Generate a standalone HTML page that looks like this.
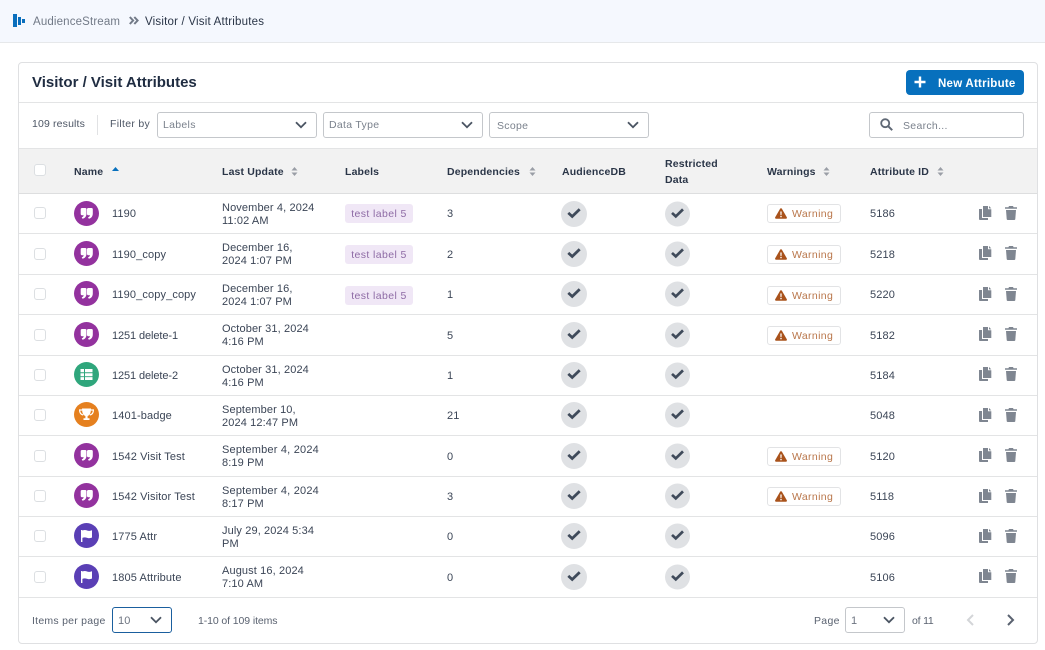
<!DOCTYPE html>
<html><head><meta charset="utf-8"><style>
html,body{margin:0;padding:0;width:1045px;height:650px;overflow:hidden;background:#fff;font-family:"Liberation Sans",sans-serif;color:#3b4556;font-size:11px}
div,span,svg{position:absolute;box-sizing:border-box}
.t{white-space:nowrap;line-height:14px;margin-top:1px;letter-spacing:.12px}
.h{font-weight:700;color:#2b3648;font-size:10.5px;letter-spacing:.15px}
.l{height:1px;background:#e3e4e5;left:19px;width:1018px}
.cb{left:34px;width:12px;height:12px;border:1px solid #dcdfe2;border-radius:3px;background:#fff}
.ic{left:74px;width:25px;height:25px}
.sel{height:26px;border:1px solid #c4c7cb;border-radius:3px;background:#fff}
.lab{left:345px;width:68px;height:19px;border-radius:3px;background:#f0e7f6;color:#8e6ba5;text-align:center;line-height:21px;font-size:10.5px;letter-spacing:.4px}
.w{left:767px;width:74px;height:19px;border:1px solid #e2e3e5;border-radius:3px;background:#fff}
.ws{left:24px;top:2px;color:#b9764a;font-size:10.5px;letter-spacing:.35px;line-height:14px}
</style></head><body>
<svg width="0" height="0" style="left:0;top:0">
<symbol id="q" viewBox="0 0 25 25"><circle cx="12.5" cy="12.5" r="12.5" fill="#93329e"/><path fill="#fff" d="M8 7h3.200c.9 0 1.300.5 1.300 1.300v4.200c0 2.800-1.500 4.700-4 5.300l-.8-1.500c1.200-.5 1.900-1.100 2-2.100H8c-.8 0-1.300-.5-1.300-1.300V8.300C6.700 7.500 7.200 7 8 7zM14.300 7h3.200c.9 0 1.300.5 1.300 1.300v4.200c0 2.800-1.500 4.700-4 5.300l-.8-1.500c1.200-.5 1.900-1.100 2-2.100h-1.700c-.8 0-1.300-.5-1.300-1.300V8.300c0-.8.5-1.300 1.300-1.300z"/></symbol>
<symbol id="g" viewBox="0 0 25 25"><circle cx="12.5" cy="12.5" r="12.5" fill="#2fa67c"/><path fill="#fff" d="M6.500 7h3.500v3.300H6.500zM11 7h7.500v3.300H11zM6.500 11.200h3.500v3H6.500zM11 11.200h7.500v3H11zM6.500 15.100h3.500V18H6.500zM11 15.100h7.500V18H11z"/></symbol>
<symbol id="tr" viewBox="0 0 25 25"><circle cx="12.5" cy="12.5" r="12.5" fill="#e5801f"/><path fill="none" stroke="#fff" stroke-width="1.2" d="M8 8H5.600c0 3 1.200 4.500 3.600 5M17 8h2.400c0 3-1.200 4.500-3.600 5"/><path fill="#fff" d="M8 6.500h9c0 4-1 6.700-3.400 7.500v2.300h1.900v1.700h-6v-1.700h1.900V14C9 13.200 8 10.500 8 6.500z"/></symbol>
<symbol id="f" viewBox="0 0 25 25"><circle cx="12.5" cy="12.5" r="12.5" fill="#5a3fb5"/><path fill="#fff" d="M7 7h1.400v.6c1.400-.8 3-.8 4.400-.2 1.400.6 3 .6 5.200-.2v7.300c-2.200.9-3.800.9-5.200.3-1.400-.6-3-.6-4.400.1V19H7z"/></symbol>
<symbol id="c" viewBox="0 0 26 26"><circle cx="13" cy="13" r="13" fill="#dfe1e4"/><path fill="none" stroke="#3f4a5a" stroke-width="2.800" d="M7.300 11.900l3.900 3.600 7.500-7.300"/></symbol>
<symbol id="wt" viewBox="0 0 12 11"><path fill="#a9521b" d="M6 .3c.4 0 .7.2.9.5l4.900 8.400c.4.700-.1 1.500-.9 1.500H1.100c-.8 0-1.300-.8-.9-1.500L5.100.8c.2-.3.5-.5.900-.5z"/><path fill="#fff" d="M5.300 3.500h1.400l-.2 3.800h-1zM5.300 8h1.400v1.300H5.300z"/></symbol>
<symbol id="cp" viewBox="0 0 13 14"><path fill="#7f8691" d="M4 0h5v3.300h3.300V11H4zM10 0l2.300 2.400H10zM0 3h3v9h6v2H1c-.6 0-1-.4-1-1z"/></symbol>
<symbol id="d" viewBox="0 0 12 14"><path fill="#7f8691" d="M4 0h4l.6 1.200H12v1.600H0V1.200h3.400zM1 4h10l-.7 9c0 .6-.5 1-1 1H2.700c-.5 0-1-.4-1-1z"/></symbol>
<symbol id="s" viewBox="0 0 7 9"><path fill="#9a9ea6" d="M3.500 0l3 3.500h-6zM3.500 9L.5 5.500h6z"/></symbol>
<symbol id="ch" viewBox="0 0 12 8"><path fill="none" stroke="#4a5462" stroke-width="1.800" d="M1 1.200l5 5 5-5"/></symbol>
</svg>

<div style="left:0;top:0;width:1045px;height:43px;background:#f5f8fe;border-bottom:1px solid #e6e8ea"></div>
<div style="left:13px;top:14px;width:4px;height:13px;background:#0a6fbd"></div>
<div style="left:18px;top:17px;width:3px;height:8px;background:#0a6fbd"></div>
<div style="left:22px;top:19px;width:3px;height:4px;background:#0a6fbd"></div>
<div class="t" style="left:33px;top:14px;color:#727a87;font-size:11.5px;letter-spacing:.15px">AudienceStream</div>
<svg style="left:129px;top:16px" width="10" height="9" viewBox="0 0 10 9"><path fill="none" stroke="#727a87" stroke-width="2" d="M.8 1l3.300 3.500L.8 8M5.300 1l3.300 3.500L5.300 8"/></svg>
<div class="t" style="left:145px;top:14px;color:#2b3648;font-size:11.5px;letter-spacing:.2px">Visitor / Visit Attributes</div>

<div style="left:18px;top:62px;width:1020px;height:582px;border:1px solid #dfe0e2;border-radius:4px;background:#fff"></div>
<div class="t" style="left:32px;top:73px;font-size:15px;line-height:18px;font-weight:700;color:#1f2c41;letter-spacing:0">Visitor / Visit Attributes</div>
<div style="left:906px;top:70px;width:118px;height:25px;background:#0770bd;border-radius:4px"></div>
<svg style="left:914px;top:76px" width="12" height="12" viewBox="0 0 12 12"><path stroke="#fff" stroke-width="2.400" d="M6 .5v11M.5 6h11"/></svg>
<div class="t" style="left:938px;top:76px;color:#fff;font-size:11.5px;font-weight:700;letter-spacing:.25px">New Attribute</div>
<div class="l" style="top:102px"></div>

<div class="t" style="left:32px;top:116px;color:#4d5665;font-size:10.5px;letter-spacing:.15px">109 results</div>
<div style="left:97px;top:115px;width:1px;height:20px;background:#e1e2e4"></div>
<div class="t" style="left:110px;top:116px;color:#4d5665;font-size:10.5px;letter-spacing:.3px">Filter by</div>
<div class="sel" style="left:157px;top:112px;width:160px"></div><div class="t" style="left:163px;top:117px;color:#7a818c;font-size:10.5px;letter-spacing:.3px">Labels</div><svg style="left:295px;top:121px" width="12" height="8"><use href="#ch"/></svg>
<div class="sel" style="left:323px;top:112px;width:160px"></div><div class="t" style="left:329px;top:117px;color:#7a818c;font-size:10.5px;letter-spacing:.3px">Data Type</div><svg style="left:461px;top:121px" width="12" height="8"><use href="#ch"/></svg>
<div class="sel" style="left:489px;top:112px;width:160px"></div><div class="t" style="left:497px;top:118px;color:#7a818c;font-size:10.5px;letter-spacing:.3px">Scope</div><svg style="left:627px;top:121px" width="12" height="8"><use href="#ch"/></svg>
<div class="sel" style="left:869px;top:112px;width:155px"></div>
<svg style="left:880px;top:118px" width="13" height="13" viewBox="0 0 13 13"><circle cx="5.200" cy="5.200" r="4" fill="none" stroke="#5f6875" stroke-width="1.800"/><path stroke="#5f6875" stroke-width="2" d="M8.200 8.200l4 4"/></svg>
<div class="t" style="left:903px;top:118px;color:#7a818c;font-size:10.5px;letter-spacing:.3px">Search...</div>

<div style="left:19px;top:148px;width:1018px;height:46px;background:#f2f2f2;border-top:1px solid #e3e4e5;border-bottom:1px solid #dddedf"></div>
<div class="cb" style="top:164px"></div>
<div class="t h" style="left:74px;top:164px">Name</div>
<svg style="left:112px;top:167px" width="7" height="4" viewBox="0 0 7 4"><path fill="#0770bd" d="M3.500 0L7 4H0z"/></svg>
<div class="t h" style="left:222px;top:164px">Last Update</div><svg style="left:291px;top:167px" width="7" height="9"><use href="#s"/></svg>
<div class="t h" style="left:345px;top:164px">Labels</div>
<div class="t h" style="left:447px;top:164px">Dependencies</div><svg style="left:529px;top:167px" width="7" height="9"><use href="#s"/></svg>
<div class="t h" style="left:562px;top:164px">AudienceDB</div>
<div class="t h" style="left:665px;top:156px">Restricted</div><div class="t h" style="left:665px;top:172px">Data</div>
<div class="t h" style="left:767px;top:164px">Warnings</div><svg style="left:823px;top:167px" width="7" height="9"><use href="#s"/></svg>
<div class="t h" style="left:870px;top:164px">Attribute ID</div><svg style="left:937px;top:167px" width="7" height="9"><use href="#s"/></svg>

<!-- row 1 -->
<div class="cb" style="top:207px"></div><svg class="ic" style="top:201px"><use href="#q"/></svg>
<div class="t" style="left:112px;top:206px">1190</div>
<div class="t" style="left:222px;top:200px">November 4, 2024</div><div class="t" style="left:222px;top:213px">11:02 AM</div>
<div class="lab" style="top:204px">test label 5</div>
<div class="t" style="left:447px;top:206px">3</div>
<svg style="left:561px;top:201px" width="26" height="26"><use href="#c"/></svg><svg style="left:665px;top:201px" width="25" height="26"><use href="#c"/></svg>
<div class="w" style="top:204px"><svg style="left:7px;top:3px" width="12" height="11"><use href="#wt"/></svg><span class="ws">Warning</span></div>
<div class="t" style="left:870px;top:206px">5186</div>
<svg style="left:979px;top:206px" width="13" height="14"><use href="#cp"/></svg><svg style="left:1005px;top:206px" width="12" height="14"><use href="#d"/></svg>
<div class="l" style="top:233px"></div>

<!-- row 2 -->
<div class="cb" style="top:248px"></div><svg class="ic" style="top:241px"><use href="#q"/></svg>
<div class="t" style="left:112px;top:247px">1190_copy</div>
<div class="t" style="left:222px;top:240px">December 16,</div><div class="t" style="left:222px;top:253px">2024 1:07 PM</div>
<div class="lab" style="top:245px">test label 5</div>
<div class="t" style="left:447px;top:247px">2</div>
<svg style="left:561px;top:241px" width="26" height="26"><use href="#c"/></svg><svg style="left:665px;top:241px" width="25" height="26"><use href="#c"/></svg>
<div class="w" style="top:245px"><svg style="left:7px;top:3px" width="12" height="11"><use href="#wt"/></svg><span class="ws">Warning</span></div>
<div class="t" style="left:870px;top:247px">5218</div>
<svg style="left:979px;top:246px" width="13" height="14"><use href="#cp"/></svg><svg style="left:1005px;top:246px" width="12" height="14"><use href="#d"/></svg>
<div class="l" style="top:274px"></div>

<!-- row 3 -->
<div class="cb" style="top:288px"></div><svg class="ic" style="top:281px"><use href="#q"/></svg>
<div class="t" style="left:112px;top:287px">1190_copy_copy</div>
<div class="t" style="left:222px;top:281px">December 16,</div><div class="t" style="left:222px;top:294px">2024 1:07 PM</div>
<div class="lab" style="top:286px">test label 5</div>
<div class="t" style="left:447px;top:287px">1</div>
<svg style="left:561px;top:281px" width="26" height="26"><use href="#c"/></svg><svg style="left:665px;top:281px" width="25" height="26"><use href="#c"/></svg>
<div class="w" style="top:286px"><svg style="left:7px;top:3px" width="12" height="11"><use href="#wt"/></svg><span class="ws">Warning</span></div>
<div class="t" style="left:870px;top:287px">5220</div>
<svg style="left:979px;top:287px" width="13" height="14"><use href="#cp"/></svg><svg style="left:1005px;top:287px" width="12" height="14"><use href="#d"/></svg>
<div class="l" style="top:314px"></div>

<!-- row 4 -->
<div class="cb" style="top:329px"></div><svg class="ic" style="top:322px"><use href="#q"/></svg>
<div class="t" style="left:112px;top:328px;letter-spacing:-.1px">1251 delete-1</div>
<div class="t" style="left:222px;top:321px">October 31, 2024</div><div class="t" style="left:222px;top:334px">4:16 PM</div>
<div class="t" style="left:447px;top:328px">5</div>
<svg style="left:561px;top:322px" width="26" height="26"><use href="#c"/></svg><svg style="left:665px;top:322px" width="25" height="26"><use href="#c"/></svg>
<div class="w" style="top:326px"><svg style="left:7px;top:3px" width="12" height="11"><use href="#wt"/></svg><span class="ws">Warning</span></div>
<div class="t" style="left:870px;top:328px">5182</div>
<svg style="left:979px;top:327px" width="13" height="14"><use href="#cp"/></svg><svg style="left:1005px;top:327px" width="12" height="14"><use href="#d"/></svg>
<div class="l" style="top:355px"></div>

<!-- row 5 -->
<div class="cb" style="top:369px"></div><svg class="ic" style="top:362px"><use href="#g"/></svg>
<div class="t" style="left:112px;top:368px;letter-spacing:-.1px">1251 delete-2</div>
<div class="t" style="left:222px;top:362px">October 31, 2024</div><div class="t" style="left:222px;top:375px">4:16 PM</div>
<div class="t" style="left:447px;top:368px">1</div>
<svg style="left:561px;top:362px" width="26" height="26"><use href="#c"/></svg><svg style="left:665px;top:362px" width="25" height="26"><use href="#c"/></svg>
<div class="t" style="left:870px;top:368px">5184</div>
<svg style="left:979px;top:367px" width="13" height="14"><use href="#cp"/></svg><svg style="left:1005px;top:367px" width="12" height="14"><use href="#d"/></svg>
<div class="l" style="top:395px"></div>

<!-- row 6 -->
<div class="cb" style="top:409px"></div><svg class="ic" style="top:402px"><use href="#tr"/></svg>
<div class="t" style="left:112px;top:408px">1401-badge</div>
<div class="t" style="left:222px;top:402px">September 10,</div><div class="t" style="left:222px;top:415px">2024 12:47 PM</div>
<div class="t" style="left:447px;top:408px">21</div>
<svg style="left:561px;top:402px" width="26" height="26"><use href="#c"/></svg><svg style="left:665px;top:402px" width="25" height="26"><use href="#c"/></svg>
<div class="t" style="left:870px;top:408px">5048</div>
<svg style="left:979px;top:408px" width="13" height="14"><use href="#cp"/></svg><svg style="left:1005px;top:408px" width="12" height="14"><use href="#d"/></svg>
<div class="l" style="top:435px"></div>

<!-- row 7 -->
<div class="cb" style="top:450px"></div><svg class="ic" style="top:443px"><use href="#q"/></svg>
<div class="t" style="left:112px;top:449px">1542 Visit Test</div>
<div class="t" style="left:222px;top:442px;letter-spacing:.2px">September 4, 2024</div><div class="t" style="left:222px;top:455px">8:19 PM</div>
<div class="t" style="left:447px;top:449px">0</div>
<svg style="left:561px;top:443px" width="26" height="26"><use href="#c"/></svg><svg style="left:665px;top:443px" width="25" height="26"><use href="#c"/></svg>
<div class="w" style="top:447px"><svg style="left:7px;top:3px" width="12" height="11"><use href="#wt"/></svg><span class="ws">Warning</span></div>
<div class="t" style="left:870px;top:449px">5120</div>
<svg style="left:979px;top:448px" width="13" height="14"><use href="#cp"/></svg><svg style="left:1005px;top:448px" width="12" height="14"><use href="#d"/></svg>
<div class="l" style="top:476px"></div>

<!-- row 8 -->
<div class="cb" style="top:490px"></div><svg class="ic" style="top:483px"><use href="#q"/></svg>
<div class="t" style="left:112px;top:489px">1542 Visitor Test</div>
<div class="t" style="left:222px;top:483px;letter-spacing:.2px">September 4, 2024</div><div class="t" style="left:222px;top:496px">8:17 PM</div>
<div class="t" style="left:447px;top:489px">3</div>
<svg style="left:561px;top:483px" width="26" height="26"><use href="#c"/></svg><svg style="left:665px;top:483px" width="25" height="26"><use href="#c"/></svg>
<div class="w" style="top:487px"><svg style="left:7px;top:3px" width="12" height="11"><use href="#wt"/></svg><span class="ws">Warning</span></div>
<div class="t" style="left:870px;top:489px">5118</div>
<svg style="left:979px;top:489px" width="13" height="14"><use href="#cp"/></svg><svg style="left:1005px;top:489px" width="12" height="14"><use href="#d"/></svg>
<div class="l" style="top:516px"></div>

<!-- row 9 -->
<div class="cb" style="top:530px"></div><svg class="ic" style="top:523px"><use href="#f"/></svg>
<div class="t" style="left:112px;top:529px">1775 Attr</div>
<div class="t" style="left:222px;top:523px">July 29, 2024 5:34</div><div class="t" style="left:222px;top:536px">PM</div>
<div class="t" style="left:447px;top:529px">0</div>
<svg style="left:561px;top:523px" width="26" height="26"><use href="#c"/></svg><svg style="left:665px;top:523px" width="25" height="26"><use href="#c"/></svg>
<div class="t" style="left:870px;top:529px">5096</div>
<svg style="left:979px;top:529px" width="13" height="14"><use href="#cp"/></svg><svg style="left:1005px;top:529px" width="12" height="14"><use href="#d"/></svg>
<div class="l" style="top:556px"></div>

<!-- row 10 -->
<div class="cb" style="top:571px"></div><svg class="ic" style="top:564px"><use href="#f"/></svg>
<div class="t" style="left:112px;top:570px">1805 Attribute</div>
<div class="t" style="left:222px;top:563px">August 16, 2024</div><div class="t" style="left:222px;top:576px">7:10 AM</div>
<div class="t" style="left:447px;top:570px">0</div>
<svg style="left:561px;top:564px" width="26" height="26"><use href="#c"/></svg><svg style="left:665px;top:564px" width="25" height="26"><use href="#c"/></svg>
<div class="t" style="left:870px;top:570px">5106</div>
<svg style="left:979px;top:569px" width="13" height="14"><use href="#cp"/></svg><svg style="left:1005px;top:569px" width="12" height="14"><use href="#d"/></svg>
<div class="l" style="top:597px"></div>

<div class="t" style="left:32px;top:613px;color:#5a6270;font-size:10.5px;letter-spacing:.25px">Items per page</div>
<div class="sel" style="left:112px;top:607px;width:60px;border-color:#1a5f9e"></div><div class="t" style="left:118px;top:613px;color:#6d7480">10</div><svg style="left:150px;top:616px" width="12" height="8"><use href="#ch"/></svg>
<div class="t" style="left:198px;top:613px;color:#5a6270;font-size:10.5px;letter-spacing:-.1px">1-10 of 109 items</div>
<div class="t" style="left:814px;top:613px;color:#5a6270;font-size:10.5px;letter-spacing:.3px">Page</div>
<div class="sel" style="left:845px;top:607px;width:60px"></div><div class="t" style="left:851px;top:613px;color:#6d7480">1</div><svg style="left:883px;top:616px" width="12" height="8"><use href="#ch"/></svg>
<div class="t" style="left:912px;top:613px;color:#5a6270;font-size:10.5px;letter-spacing:-.2px">of 11</div>
<svg style="left:966px;top:614px" width="8" height="12" viewBox="0 0 8 12"><path fill="none" stroke="#d3d5d8" stroke-width="2" d="M7 1L2 6l5 5"/></svg>
<svg style="left:1007px;top:614px" width="8" height="12" viewBox="0 0 8 12"><path fill="none" stroke="#5a6270" stroke-width="2" d="M1 1l5 5-5 5"/></svg>
</body></html>
